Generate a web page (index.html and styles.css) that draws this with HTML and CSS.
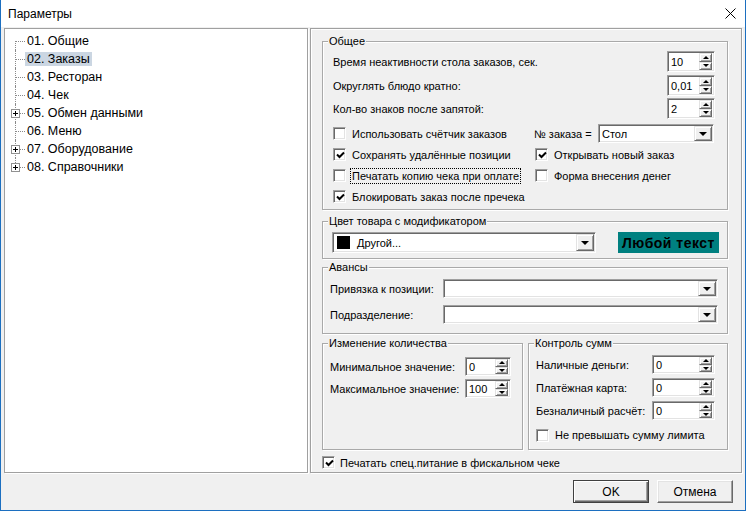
FILE: index.html
```html
<!DOCTYPE html>
<html>
<head>
<meta charset="utf-8">
<link rel="stylesheet" href="styles.css">
</head>
<body>

<div id="win">
	<div id="title">
		<span class="cap">Параметры</span>
		<svg class="close" width="11" height="11" viewBox="0 0 11 11"><path d="M0.5 0.5 L10.5 10.5 M10.5 0.5 L0.5 10.5" stroke="#000" stroke-width="1"/></svg>
	</div>

	<div id="client">
		<div id="main">
			<!-- дерево разделов -->
			<div id="tree">
				<div class="node first"><span class="gut"></span><span class="txt">01. Общие</span></div>
				<div class="node sel"><span class="gut"></span><span class="txt">02. Заказы</span></div>
				<div class="node"><span class="gut"></span><span class="txt">03. Ресторан</span></div>
				<div class="node"><span class="gut"></span><span class="txt">04. Чек</span></div>
				<div class="node"><span class="gut"><svg class="plus" width="9" height="9" viewBox="0 0 9 9"><rect x="0.5" y="0.5" width="8" height="8" fill="#fff" stroke="#919191"/><path d="M2 4.5h5M4.5 2v5" stroke="#000"/></svg></span><span class="txt">05. Обмен данными</span></div>
				<div class="node"><span class="gut"></span><span class="txt">06. Меню</span></div>
				<div class="node"><span class="gut"><svg class="plus" width="9" height="9" viewBox="0 0 9 9"><rect x="0.5" y="0.5" width="8" height="8" fill="#fff" stroke="#919191"/><path d="M2 4.5h5M4.5 2v5" stroke="#000"/></svg></span><span class="txt">07. Оборудование</span></div>
				<div class="node last"><span class="gut"><svg class="plus" width="9" height="9" viewBox="0 0 9 9"><rect x="0.5" y="0.5" width="8" height="8" fill="#fff" stroke="#919191"/><path d="M2 4.5h5M4.5 2v5" stroke="#000"/></svg></span><span class="txt">08. Справочники</span></div>
			</div>

			<div id="panel">
				<fieldset class="grp g-common">
					<legend>Общее</legend>
					<div class="gbody">
						<div class="frow fr1"><span>Время неактивности стола заказов, сек.</span><span class="spin sp-a"><span class="val">10</span><span class="arr"><i class="up"></i><i class="dn"></i></span></span></div>
						<div class="frow fr2"><span>Округлять блюдо кратно:</span><span class="spin sp-a"><span class="val">0,01</span><span class="arr"><i class="up"></i><i class="dn"></i></span></span></div>
						<div class="frow fr3"><span>Кол-во знаков после запятой:</span><span class="spin sp-a"><span class="val">2</span><span class="arr"><i class="up"></i><i class="dn"></i></span></span></div>

						<div class="checks">
							<div class="crow"><span class="cb"></span><span class="lbl">Использовать счётчик заказов</span></div>
							<div class="crow"><span class="nlbl">№ заказа =</span><span class="combo c-stol"><span class="val">Стол</span><span class="drop"><i class="dn"></i></span></span></div>
							<div class="crow"><span class="cb on"><svg width="9" height="9" viewBox="0 0 9 9"><path d="M1 3.5 L3.5 6 L8 1.5" stroke="#000" stroke-width="2" fill="none"/></svg></span><span class="lbl">Сохранять удалённые позиции</span></div>
							<div class="crow"><span class="cb on"><svg width="9" height="9" viewBox="0 0 9 9"><path d="M1 3.5 L3.5 6 L8 1.5" stroke="#000" stroke-width="2" fill="none"/></svg></span><span class="lbl">Открывать новый заказ</span></div>
							<div class="crow"><span class="cb"></span><span class="lbl focus">Печатать копию чека при оплате</span></div>
							<div class="crow"><span class="cb"></span><span class="lbl">Форма внесения денег</span></div>
							<div class="crow"><span class="cb on"><svg width="9" height="9" viewBox="0 0 9 9"><path d="M1 3.5 L3.5 6 L8 1.5" stroke="#000" stroke-width="2" fill="none"/></svg></span><span class="lbl">Блокировать заказ после пречека</span></div>
						</div>
					</div>
				</fieldset>

				<fieldset class="grp g-color">
					<legend>Цвет товара с модификатором</legend>
					<div class="gbody">
						<span class="combo c-color"><span class="val"><span class="swatch"></span>Другой...</span><span class="drop"><i class="dn"></i></span></span>
						<span class="sample">Любой текст</span>
					</div>
				</fieldset>

				<fieldset class="grp g-avans">
					<legend>Авансы</legend>
					<div class="gbody">
						<div class="arow ar1"><span class="alb">Привязка к позиции:</span><span class="combo c-wide"><span class="val"></span><span class="drop"><i class="dn"></i></span></span></div>
						<div class="arow ar2"><span class="alb">Подразделение:</span><span class="combo c-wide"><span class="val"></span><span class="drop"><i class="dn"></i></span></span></div>
					</div>
				</fieldset>

				<div class="pair">
					<fieldset class="grp g-qty">
						<legend>Изменение количества</legend>
						<div class="gbody">
							<div class="qrow q1"><span class="qlb">Минимальное значение:</span><span class="spin sp-q"><span class="val">0</span><span class="arr"><i class="up"></i><i class="dn"></i></span></span></div>
							<div class="qrow q2"><span class="qlb">Максимальное значение:</span><span class="spin sp-q"><span class="val">100</span><span class="arr"><i class="up"></i><i class="dn"></i></span></span></div>
						</div>
					</fieldset>
					<fieldset class="grp g-sum">
						<legend>Контроль сумм</legend>
						<div class="gbody">
							<div class="srow s1"><span class="slb">Наличные деньги:</span><span class="spin sp-s"><span class="val">0</span><span class="arr"><i class="up"></i><i class="dn"></i></span></span></div>
							<div class="srow s2"><span class="slb">Платёжная карта:</span><span class="spin sp-s"><span class="val">0</span><span class="arr"><i class="up"></i><i class="dn"></i></span></span></div>
							<div class="srow s3"><span class="slb">Безналичный расчёт:</span><span class="spin sp-s"><span class="val">0</span><span class="arr"><i class="up"></i><i class="dn"></i></span></span></div>
							<div class="srow s4"><span class="cb"></span><span class="lbl">Не превышать сумму лимита</span></div>
						</div>
					</fieldset>
				</div>

				<div class="lastcheck"><span class="cb on"><svg width="9" height="9" viewBox="0 0 9 9"><path d="M1 3.5 L3.5 6 L8 1.5" stroke="#000" stroke-width="2" fill="none"/></svg></span><span class="lbl2">Печатать спец.питание в фискальном чеке</span></div>
			</div>
		</div>

		<div id="buttons">
			<span class="btn def">OK</span>
			<span class="btn">Отмена</span>
		</div>
	</div>
</div>

</body>
</html>
```

FILE: styles.css
```css
body {
	margin: 0;
	background: #fff;
	font-family: "Liberation Sans", Arial, sans-serif;
	font-size: 11px;
	color: #000;
}

#win {
	width: 746px;
	height: 511px;
	box-sizing: border-box;
	border: 1px solid #1c6fc0;
	border-top: 0;
	display: flex;
	flex-direction: column;
}

#title {
	height: 27px;
	flex: none;
	background: #fff;
	display: flex;
	align-items: center;
	padding-left: 7px;
	font-size: 12px;
}
#title .cap { flex: 1; }
.close { margin-right: 9px; }

#client {
	flex: 1;
	background: #f0f0f0;
	padding: 1px 3px 0 3px;
}

#main {
	display: flex;
	gap: 2px;
	height: 445px;
}

/* дерево */
#tree {
	width: 304px;
	box-sizing: border-box;
	background: #fff;
	border: 1px solid #a0a0a0;
	box-shadow: 1px 1px 0 #fff;
	padding: 3px 0 0 1px;
	font-size: 12.5px;
}
.node {
	display: flex;
	align-items: center;
	height: 18px;
}
.gut {
	position: relative;
	width: 19px;
	height: 18px;
	display: flex;
	align-items: center;
	flex: none;
}
.gut::before {			/* вертикальная линия */
	content: "";
	position: absolute;
	left: 9px;
	top: 0;
	bottom: 0;
	border-left: 1px dotted #8a8a8a;
}
.first .gut::before { top: 9px; }
.last .gut::before { bottom: 9px; }
.gut::after {			/* горизонтальная линия */
	content: "";
	position: absolute;
	left: 10px;
	top: 9px;
	width: 9px;
	border-top: 1px dotted #8a8a8a;
}
.plus {
	position: relative;
	z-index: 1;
	margin-left: 5px;
}
.txt {
	padding: 0 2px;
	line-height: 14px;
}
.sel .txt { background: #cbd6e2; }

/* правая панель */
#panel {
	width: 432px;
	box-sizing: border-box;
	border: 1px solid #a0a0a0;
	box-shadow: inset 1px 1px 0 #fff, 1px 1px 0 #fff;
	padding: 6px 13px 0 11px;
}

.grp {
	margin: 0;
	padding: 0;
	min-width: 0;
	box-sizing: border-box;
	border: 1px solid #a9a9a9;
	box-shadow: inset 1px 1px 0 #fff, 1px 1px 0 #fff;
}
.grp legend {
	padding: 0 1px;
	margin-left: 5px;
	line-height: 12px;
	font-size: 11px;
	background: #f0f0f0;
}

.g-common { height: 175px; }
.g-common .gbody { padding: 0 12px 0 10px; }
.frow {
	display: flex;
	align-items: center;
	justify-content: space-between;
	height: 21px;
}
.fr1 { margin-top: 4px; }
.fr2 { margin-top: 3px; }
.fr3 { margin-top: 2px; }

.checks {
	display: grid;
	grid-template-columns: 202px 1fr;
	grid-auto-rows: 21px;
	margin-top: 4px;
}
.crow {
	display: flex;
	align-items: center;
}
.nlbl { width: 64px; margin-left: -1px; }

/* чекбокс */
.cb {
	width: 13px;
	height: 13px;
	box-sizing: border-box;
	flex: none;
	background: #fff;
	border: 1px solid;
	border-color: #a0a0a0 #fff #fff #a0a0a0;
	box-shadow: inset 1px 1px 0 #696969, inset -1px -1px 0 #e3e3e3;
	display: flex;
	align-items: center;
	justify-content: center;
}
.cb svg { margin: 1px 0 0 1px; }
.lbl { margin-left: 6px; }
.focus {
	outline: 1px dotted #000;
	padding: 1px 1px 1px 0;
	margin-left: 5px;
	padding-left: 1px;
}

/* поле со счётчиком и выпадающий список */
.spin, .combo {
	display: flex;
	box-sizing: border-box;
	background: #fff;
	border: 1px solid;
	border-color: #a0a0a0 #fff #fff #a0a0a0;
	box-shadow: inset 1px 1px 0 #696969, inset -1px -1px 0 #e3e3e3;
	padding: 1px;
}
.spin .val, .combo .val {
	flex: 1;
	display: flex;
	align-items: center;
	padding-left: 2px;
	white-space: nowrap;
}
.spin .arr {
	width: 13px;
	display: flex;
	flex-direction: column;
	margin-right: 1px;
}
.arr i, .drop {
	flex: 1;
	display: flex;
	align-items: center;
	justify-content: center;
	background: #f0f0f0;
	border: 1px solid;
	border-color: #e3e3e3 #696969 #696969 #e3e3e3;
	box-shadow: inset 1px 1px 0 #fff, inset -1px -1px 0 #a0a0a0;
}
.arr i.up::after {
	content: "";
	border-left: 3px solid transparent;
	border-right: 3px solid transparent;
	border-bottom: 3px solid #000;
}
.arr i.dn::after, .drop i::after {
	content: "";
	display: block;
	border-left: 3px solid transparent;
	border-right: 3px solid transparent;
	border-top: 3px solid #000;
}
.drop {
	flex: none;
	width: 16px;
}
.drop i::after {
	border-left-width: 4px;
	border-right-width: 4px;
	border-top-width: 4px;
}

.sp-a { width: 48px; height: 21px; }
.c-stol { width: 116px; height: 19px; }

/* цвет */
.g-color { height: 44px; margin-top: 5px; }
.g-color .gbody {
	display: flex;
	padding-left: 9px;
	margin-top: 5px;
}
.c-color { width: 264px; height: 21px; }
.swatch {
	width: 13px;
	height: 13px;
	background: #000;
	margin: 0 7px 0 1px;
}
.sample {
	margin-left: 22px;
	width: 101px;
	height: 21px;
	background: #008080;
	color: #000;
	font-weight: bold;
	font-size: 14px;
	letter-spacing: 0.5px;
	display: flex;
	align-items: center;
	justify-content: center;
}

/* авансы */
.g-avans { height: 73px; margin-top: 2px; }
.g-avans .gbody { padding-left: 7px; }
.arow {
	display: flex;
	align-items: center;
	height: 19px;
}
.ar1 { margin-top: 6px; }
.ar2 { margin-top: 7px; }
.alb { width: 113px; }
.c-wide { width: 275px; height: 19px; }

/* две группы внизу */
.pair {
	display: flex;
	gap: 5px;
	margin-top: 3px;
}
.g-qty { width: 201px; height: 113px; }
.g-sum { width: 200px; height: 113px; }
.g-qty .gbody, .g-sum .gbody { padding-left: 7px; }
.qrow, .srow {
	display: flex;
	align-items: center;
	height: 19px;
}
.q1 { margin-top: 8px; }
.q2 { margin-top: 3px; }
.qlb { width: 135px; }
.sp-q { width: 46px; height: 19px; }

.s1 { margin-top: 6px; }
.s2, .s3 { margin-top: 4px; }
.s4 { margin-top: 5px; height: 20px; }
.slb { width: 116px; }
.sp-s { width: 63px; height: 19px; }

.lastcheck {
	display: flex;
	align-items: center;
	height: 13px;
	margin-top: 6px;
}
.lbl2 { margin-left: 5px; }

/* кнопки */
#buttons {
	display: flex;
	justify-content: flex-end;
	gap: 8px;
	margin-top: 7px;
	padding-right: 9px;
}
.btn {
	width: 76px;
	height: 23px;
	box-sizing: border-box;
	display: flex;
	align-items: center;
	justify-content: center;
	background: #f0f0f0;
	border: 1px solid;
	border-color: #fff #696969 #696969 #fff;
	box-shadow: inset -1px -1px 0 #a0a0a0, inset 1px 1px 0 #e3e3e3;
	font-size: 12px;
}
.btn.def {
	border-color: #404040;
	box-shadow: inset 1px 1px 0 #fff, inset -1px -1px 0 #696969, inset -2px -2px 0 #a0a0a0;
}
```
